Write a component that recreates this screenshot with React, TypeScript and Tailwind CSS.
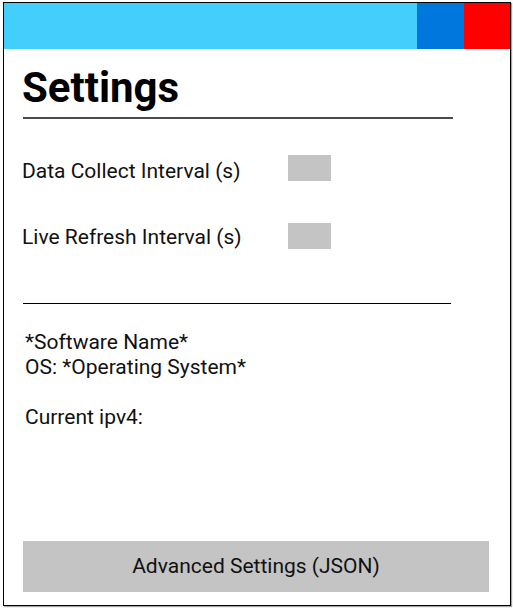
const rows = [
  { label: "Data Collect Interval (s)", textTop: "mt-[3px]" },
  { label: "Live Refresh Interval (s)", textTop: "mt-[1px]" },
];

export default function App() {
  return (
    <div className="min-h-[608px] bg-white pl-[3px] pt-[2px]" style={{ fontFamily: "Roboto, 'Noto Sans', sans-serif" }}>
      <div className="flex h-[604px] w-[508px] flex-col border border-black shadow-[1px_1px_1px_rgba(0,0,0,0.35)]">
        {/* Title bar */}
        <div className="flex h-[46px] shrink-0">
          <div className="flex-1 bg-[#44cefb]" />
          <div className="w-[47px] bg-[#0077dd]" />
          <div className="w-[46px] bg-[#ff0000]" />
        </div>

        <h1 className="ml-[18px] mt-[18px] text-[42px] font-bold leading-none text-black">Settings</h1>
        <div className="ml-[19px] mt-[8px] h-[2px] w-[430px] bg-[#4a4a4a]" />

        <div className="mt-[36px] flex flex-col gap-[42px]">
          {rows.map((r) => (
            <div key={r.label} className="ml-[18px] flex h-[26px] items-start">
              <span className={`w-[266px] text-[21px] leading-[26px] text-[#111] ${r.textTop}`}>{r.label}</span>
              <div className="h-[26px] w-[43px] bg-[#c4c4c4]" />
            </div>
          ))}
        </div>

        <div className="ml-[19px] mt-[54px] h-px w-[428px] bg-black" />

        <div className="ml-[21px] mt-[26px] text-[21px] leading-[25px] text-[#111]">
          <div>*Software Name*</div>
          <div>OS: *Operating System*</div>
          <div className="mt-[25px]">Current ipv4:</div>
        </div>

        <button className="mb-[13px] ml-[19px] mt-auto h-[51px] w-[466px] bg-[#c4c4c4] text-[21px] text-[#111]">
          Advanced Settings (JSON)
        </button>
      </div>
    </div>
  );
}
